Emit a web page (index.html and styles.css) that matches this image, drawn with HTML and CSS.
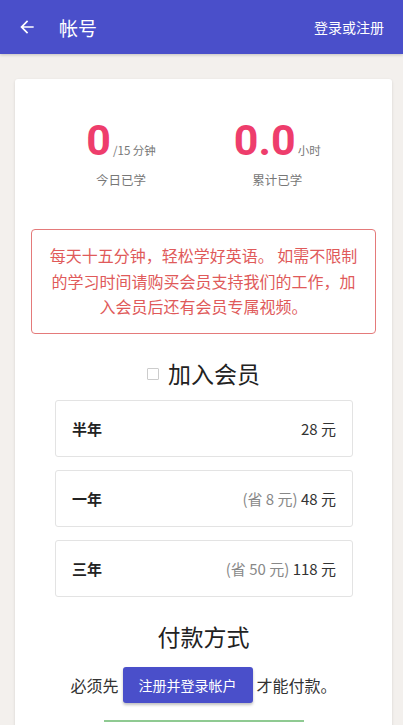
FILE: index.html
```html
<!DOCTYPE html>
<html lang="zh">
<head>
<meta charset="utf-8">
<link rel="stylesheet" href="styles.css">
</head>
<body>
<header class="topbar">
  <div class="topbar-left">
    <svg class="back" width="20" height="20" viewBox="0 0 24 24"><path d="M20 11H7.83l5.59-5.59L12 4l-8 8 8 8 1.41-1.41L7.83 13H20v-2z" fill="#fff"/></svg>
    <span class="title">帐号</span>
  </div>
  <span class="login">登录或注册</span>
</header>
<main class="page">
  <section class="card">
    <div class="stats">
      <div class="stat">
        <div class="stat-num"><span class="big">0</span><span class="unit">/15 分钟</span></div>
        <div class="stat-label">今日已学</div>
      </div>
      <div class="stat">
        <div class="stat-num"><span class="big">0.0</span><span class="unit">小时</span></div>
        <div class="stat-label">累计已学</div>
      </div>
    </div>
    <div class="notice">每天十五分钟，轻松学好英语。 如需不限制的学习时间请购买会员支持我们的工作，加入会员后还有会员专属视频。</div>
    <h2 class="section-title"><span class="checkbox"></span>加入会员</h2>
    <div class="plans">
      <div class="plan"><span class="plan-name">半年</span><span class="plan-price">28 元</span></div>
      <div class="plan"><span class="plan-name">一年</span><span class="plan-price"><span class="save">(省 8 元)</span> 48 元</span></div>
      <div class="plan"><span class="plan-name">三年</span><span class="plan-price"><span class="save">(省 50 元)</span> 118 元</span></div>
    </div>
    <h2 class="section-title pay">付款方式</h2>
    <div class="pay-row">必须先<span class="btn">注册并登录帐户</span>才能付款。</div>
    <div class="green-line"></div>
  </section>
</main>
</body>
</html>
```
FILE: styles.css
```css
* { box-sizing: border-box; }
html, body { margin: 0; padding: 0; }
body {
  background: #f3f0ed;
  font-family: "Noto Sans CJK SC", "Noto Sans", sans-serif;
  color: #333;
  width: 403px;
  height: 725px;
  overflow: hidden;
}
.topbar {
  height: 54px;
  background: #4a4fca;
  display: flex;
  align-items: center;
  justify-content: space-between;
  padding: 0 19px 0 17px;
  color: #fff;
  box-shadow: 0 1px 3px rgba(0,0,0,0.2);
}
.topbar-left { display: flex; align-items: center; }
.back { display: block; }
.title { font-size: 19px; margin-left: 22px; line-height: 1; }
.login { font-size: 14px; }
.page { padding: 25px 11px 0 15px; }
.card {
  background: #fff;
  border-radius: 3px;
  box-shadow: 0 1px 3px rgba(0,0,0,0.12);
  padding: 39px 16px 0;
  height: 680px;
}
.stats { display: flex; justify-content: center; gap: 78px; }
.stat { display: flex; flex-direction: column; align-items: center; }
.stat-num { display: flex; align-items: baseline; line-height: 1; }
.big {
  font-family: Roboto, "Noto Sans", sans-serif;
  font-weight: 700;
  font-size: 43px;
  color: #ee3d6c;
  line-height: 44px;
}
.unit { font-size: 11.5px; color: #777; margin-left: 2px; }
.stat-label { font-size: 12.5px; color: #777; margin-top: 8px; }
.notice {
  margin-top: 40px;
  border: 1px solid #e47a7a;
  border-radius: 4px;
  padding: 13px 16px;
  color: #e05a5a;
  font-size: 16px;
  line-height: 25.5px;
  text-align: center;
}
.section-title {
  margin: 22px 0 0;
  font-weight: 400;
  font-size: 23px;
  color: #222;
  text-align: center;
  line-height: 34px;
  display: flex;
  align-items: center;
  justify-content: center;
}
.checkbox {
  width: 12px;
  height: 12px;
  border: 1px solid #ccc;
  border-radius: 1px;
  margin-right: 9px;
  margin-top: 2px;
}
.plans {
  margin: 10px 23px 0 24px;
  display: flex;
  flex-direction: column;
  gap: 13px;
}
.plan {
  height: 57px;
  border: 1px solid #e3e3e3;
  border-radius: 3px;
  display: flex;
  align-items: center;
  justify-content: space-between;
  padding: 0 16px 0 16px;
  font-size: 15px;
}
.plan-name { font-weight: 700; color: #222; }
.plan-price { color: #333; }
.save { color: #888; }
.section-title.pay { margin-top: 22px; }
.pay-row {
  margin-top: 14px;
  display: flex;
  align-items: center;
  justify-content: center;
  font-size: 16px;
  color: #333;
}
.btn {
  background: #4a4fca;
  color: #fff;
  font-size: 14px;
  height: 36px;
  padding: 0 16px;
  border-radius: 3px;
  display: inline-flex;
  align-items: center;
  margin: 0 4px;
  box-shadow: 0 2px 3px rgba(0,0,0,0.25);
}
.green-line {
  margin: 17px auto 0;
  width: 200px;
  border-top: 2px solid #8fca92;
}
```
